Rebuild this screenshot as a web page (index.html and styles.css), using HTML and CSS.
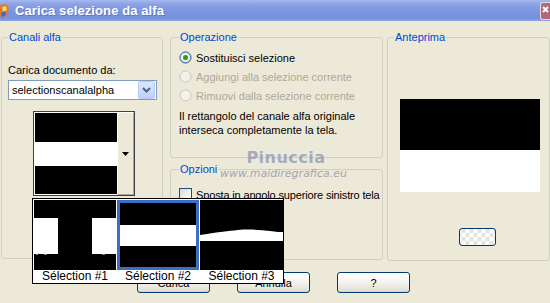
FILE: index.html
```html
<!DOCTYPE html>
<html>
<head>
<meta charset="utf-8">
<link rel="stylesheet" href="styles.css">
</head>
<body>
<div class="window">
  <div class="titlebar">
    <svg class="appicon" width="11" height="16" viewBox="0 0 11 16"><path d="M0 2 L6 1 L9 5 L7 12 L2 15 L0 13 Z" fill="#e07a2a"/><path d="M2 4 L6 3 L7 7 L3 9 Z" fill="#f5d36a"/><path d="M1 10 L5 8 L6 12 L2 14 Z" fill="#3a6ad0"/></svg>
    <span class="title">Carica selezione da alfa</span>
    <span class="closebtn"><svg width="9" height="15" viewBox="0 0 9 15"><path d="M2 4 L7 9 M7 4 L2 9" stroke="#fff" stroke-width="2"/></svg></span>
  </div>
  <div class="main">
    <fieldset class="group g-left">
      <legend>Canali alfa</legend>
      <div class="lbl">Carica documento da:</div>
      <div class="select">
        <span class="select-text">selectionscanalalpha</span>
        <span class="select-btn"><svg width="9" height="6" viewBox="0 0 9 6"><path d="M1 1 L4.5 4.5 L8 1" fill="none" stroke="#4d6185" stroke-width="2"/></svg></span>
      </div>
      <div class="combo">
        <div class="combo-img">
          <div class="band black b1"></div>
          <div class="band white b2"></div>
          <div class="band black b3"></div>
        </div>
        <div class="combo-btn"><svg width="7" height="4" viewBox="0 0 7 4"><path d="M0 0 H7 L3.5 4 Z" fill="#000"/></svg></div>
      </div>
    </fieldset>
    <div class="midcol">
      <fieldset class="group g-op">
        <legend>Operazione</legend>
        <div class="row">
          <svg class="radio" width="13" height="13" viewBox="0 0 13 13"><defs><radialGradient id="rg" cx="0.4" cy="0.4" r="0.7"><stop offset="0" stop-color="#ffffff"/><stop offset="1" stop-color="#dcdad0"/></radialGradient></defs><circle cx="6.5" cy="6.5" r="5.5" fill="url(#rg)" stroke="#1c5180"/><circle cx="6.5" cy="6.5" r="2.5" fill="#21a121"/></svg>
          <span>Sostituisci selezione</span>
        </div>
        <div class="row disabled">
          <svg class="radio" width="13" height="13" viewBox="0 0 13 13"><circle cx="6.5" cy="6.5" r="5.5" fill="#f2f1ea" stroke="#cac8bb"/></svg>
          <span>Aggiungi alla selezione corrente</span>
        </div>
        <div class="row disabled">
          <svg class="radio" width="13" height="13" viewBox="0 0 13 13"><circle cx="6.5" cy="6.5" r="5.5" fill="#f2f1ea" stroke="#cac8bb"/></svg>
          <span>Rimuovi dalla selezione corrente</span>
        </div>
        <p class="note">Il rettangolo del canale alfa originale<br>interseca completamente la tela.</p>
      </fieldset>
      <fieldset class="group g-opt">
        <legend>Opzioni</legend>
        <div class="row crow">
          <span class="checkbox"></span>
          <span class="nowrap">Sposta in angolo superiore sinistro tela</span>
        </div>
      </fieldset>
    </div>
    <fieldset class="group g-right">
      <legend>Anteprima</legend>
      <div class="preview"><div class="pv-black"></div><div class="pv-white"></div></div>
      <div class="smallbtn"></div>
    </fieldset>
  </div>
  <div class="buttons">
    <div class="btn">Carica</div>
    <div class="btn">Annulla</div>
    <div class="btn">?</div>
  </div>

  <div class="watermark">
    <div class="wm1">Pinuccia</div>
    <div class="wm2">www.maidiregrafica.eu</div>
  </div>

  <div class="popup">
    <div class="item">
      <div class="thumb">
        <svg width="82" height="70" viewBox="0 0 82 70" preserveAspectRatio="none">
          <rect width="82" height="70" fill="#000"/>
          <rect x="0" y="18" width="24" height="36" fill="#fff"/>
          <rect x="58" y="18" width="24" height="36" fill="#fff"/>
          <path d="M2 54 h2 v-1 h2 M10 54 h3 M16 53 h2 M62 53 h2 M68 54 h3 M75 53 h3" stroke="#fff" stroke-width="1"/>
        </svg>
      </div>
      <div class="cap">Sélection #1</div>
    </div>
    <div class="item sel">
      <div class="thumb">
        <svg width="76" height="64" viewBox="0 0 76 64" preserveAspectRatio="none">
          <rect width="76" height="64" fill="#000"/>
          <rect x="0" y="22" width="76" height="21" fill="#fff"/>
        </svg>
      </div>
      <div class="cap">Sélection #2</div>
    </div>
    <div class="item">
      <div class="thumb">
        <svg width="83" height="70" viewBox="0 0 83 70" preserveAspectRatio="none">
          <rect width="83" height="70" fill="#000"/>
          <path d="M0 35 C20 32 28 31 38 30 C50 29 60 30 70 31 C76 32 80 32 83 32 L83 41 L0 41 Z" fill="#fff"/>
        </svg>
      </div>
      <div class="cap">Sélection #3</div>
    </div>
  </div>
</div>
</body>
</html>
```
FILE: styles.css
```css
html, body {
  margin: 0;
  padding: 0;
}
body {
  width: 550px;
  height: 303px;
  overflow: hidden;
  font-family: "Liberation Sans", Arial, sans-serif;
  font-size: 11px;
  color: #000;
}
.window {
  position: relative;
  width: 550px;
  height: 303px;
  background: #ece9d8;
  overflow: hidden;
}
.titlebar {
  height: 21px;
  display: flex;
  align-items: center;
  background: linear-gradient(to bottom, #a6b9ee 0%, #8aa2e6 20%, #7b94df 60%, #7690dc 88%, #8fa5e6 100%);
  position: relative;
}
.appicon {
  margin-left: 0;
  margin-right: 4px;
}
.title {
  color: #fff;
  font-family: "Liberation Sans", Arial, sans-serif;
  font-weight: bold;
  font-size: 13px;
  letter-spacing: 0.1px;
  text-shadow: 1px 1px 0 #5f78c4;
}
.closebtn {
  margin-left: auto;
  width: 9px;
  height: 16px;
  background: #b4667c;
  border-radius: 3px 0 0 3px;
  border: 1px solid #ddd;
  border-right: none;
  display: flex;
  align-items: center;
}
.main {
  display: flex;
  align-items: flex-start;
  padding: 10px 0 0 1px;
}
.group {
  margin: 0;
  border: 1px solid #d0d0bf;
  border-radius: 3px;
  padding: 0 6px;
  min-width: 0;
  box-sizing: border-box;
}
.group legend {
  color: #0046d5;
  padding: 0 1px;
  margin-left: 0;
  line-height: 13px;
  font-size: 11px;
}
.g-left {
  width: 165px;
  height: 228px;
}
.lbl {
  margin-top: 20px;
  line-height: 13px;
}
.select {
  margin-top: 3px;
  width: 149px;
  height: 20px;
  box-sizing: border-box;
  border: 1px solid #7f9db9;
  background: #fff;
  display: flex;
  align-items: center;
}
.select-text {
  flex: 1;
  padding-left: 3px;
}
.select-btn {
  width: 15px;
  height: 16px;
  margin-right: 1px;
  border: 1px solid #b7cbf5;
  border-radius: 2px;
  background: linear-gradient(to bottom, #dce6fd, #bdd0fb);
  display: flex;
  align-items: center;
  justify-content: center;
}
.combo {
  margin: 11px 0 0 25px;
  width: 102px;
  height: 85px;
  box-sizing: border-box;
  border: 1px solid #404040;
  display: flex;
  background: #ece9d8;
}
.combo-img {
  width: 82px;
  display: flex;
  flex-direction: column;
  border: 1px solid #fff;
  border-right: none;
}
.band.black { background: #000; }
.band.white { background: #fff; }
.b1 { height: 29px; }
.b2 { height: 24px; }
.b3 { flex: 1; }
.combo-btn {
  flex: 1;
  border: 1px solid #fff;
  border-right-color: #aca899;
  border-bottom-color: #aca899;
  display: flex;
  align-items: center;
  justify-content: center;
}
.midcol {
  margin-left: 7px;
  display: flex;
  flex-direction: column;
  gap: 5px;
}
.g-op {
  width: 213px;
  height: 127px;
  padding: 0 8px;
}
.row {
  height: 19px;
  display: flex;
  align-items: center;
  gap: 4px;
}
.g-op .row:first-of-type {
  margin-top: 4px;
}
.row.disabled {
  color: #aca899;
}
.radio {
  flex: none;
}
.note {
  margin: 4px 0 0 0;
  line-height: 14px;
}
.g-opt {
  width: 213px;
  height: 97px;
  padding: 0 8px;
}
.crow {
  margin-top: 9px;
}
.nowrap {
  white-space: nowrap;
  letter-spacing: -0.15px;
}
.checkbox {
  width: 13px;
  height: 13px;
  box-sizing: border-box;
  border: 1px solid #1c5180;
  background: linear-gradient(135deg, #dcdad0, #ffffff);
  flex: none;
}
.g-right {
  margin-left: 4px;
  width: 166px;
  height: 230px;
  padding: 0 6px;
}
.preview {
  margin: 55px 0 0 6px;
  width: 140px;
  height: 93px;
  display: flex;
  flex-direction: column;
}
.pv-black { height: 51px; background: #000; }
.pv-white { flex: 1; background: #fff; }
.smallbtn {
  margin: 36px 0 0 65px;
  width: 37px;
  height: 18px;
  box-sizing: border-box;
  border: 1px solid #003c74;
  border-radius: 3px;
  background:
    repeating-conic-gradient(#ffffff 0 25%, #e4e3dc 0 50%) 50% 50% / 8px 8px;
}
.buttons {
  display: flex;
  gap: 27px;
  padding-left: 137px;
  margin-top: 11px;
}
.btn {
  width: 73px;
  height: 21px;
  box-sizing: border-box;
  border: 1px solid #003c74;
  border-radius: 3px;
  background: linear-gradient(to bottom, #ffffff 0%, #f4f3ee 50%, #e3e1d6 90%, #d6d0c5 100%);
  display: flex;
  align-items: center;
  justify-content: center;
}
.watermark {
  position: absolute;
  left: 220px;
  top: 147px;
  width: 120px;
  text-align: center;
  pointer-events: none;
}
.wm1 {
  font-family: "DejaVu Sans", sans-serif;
  font-size: 16px;
  font-weight: bold;
  letter-spacing: 0.5px;
  color: rgba(125, 135, 175, 0.65);
  line-height: 21px;
  padding-left: 12px;
}
.wm2 {
  font-family: "DejaVu Sans", sans-serif;
  font-style: italic;
  font-size: 11px;
  color: rgba(110, 115, 150, 0.6);
  line-height: 12px;
}
.popup {
  position: absolute;
  left: 32px;
  top: 198px;
  width: 252px;
  height: 86px;
  box-sizing: border-box;
  border: 1px solid #000;
  background: #fff;
  display: grid;
  grid-template-columns: 82px 82px 83px;
  column-gap: 1px;
  padding: 1px 0 0 1px;
}
.item {
  display: flex;
  flex-direction: column;
}
.thumb {
  height: 70px;
  box-sizing: border-box;
  display: flex;
}
.item.sel .thumb {
  border: 3px solid #3a6fc6;
}
.cap {
  text-align: center;
  font-size: 12px;
  line-height: 13px;
}
```
